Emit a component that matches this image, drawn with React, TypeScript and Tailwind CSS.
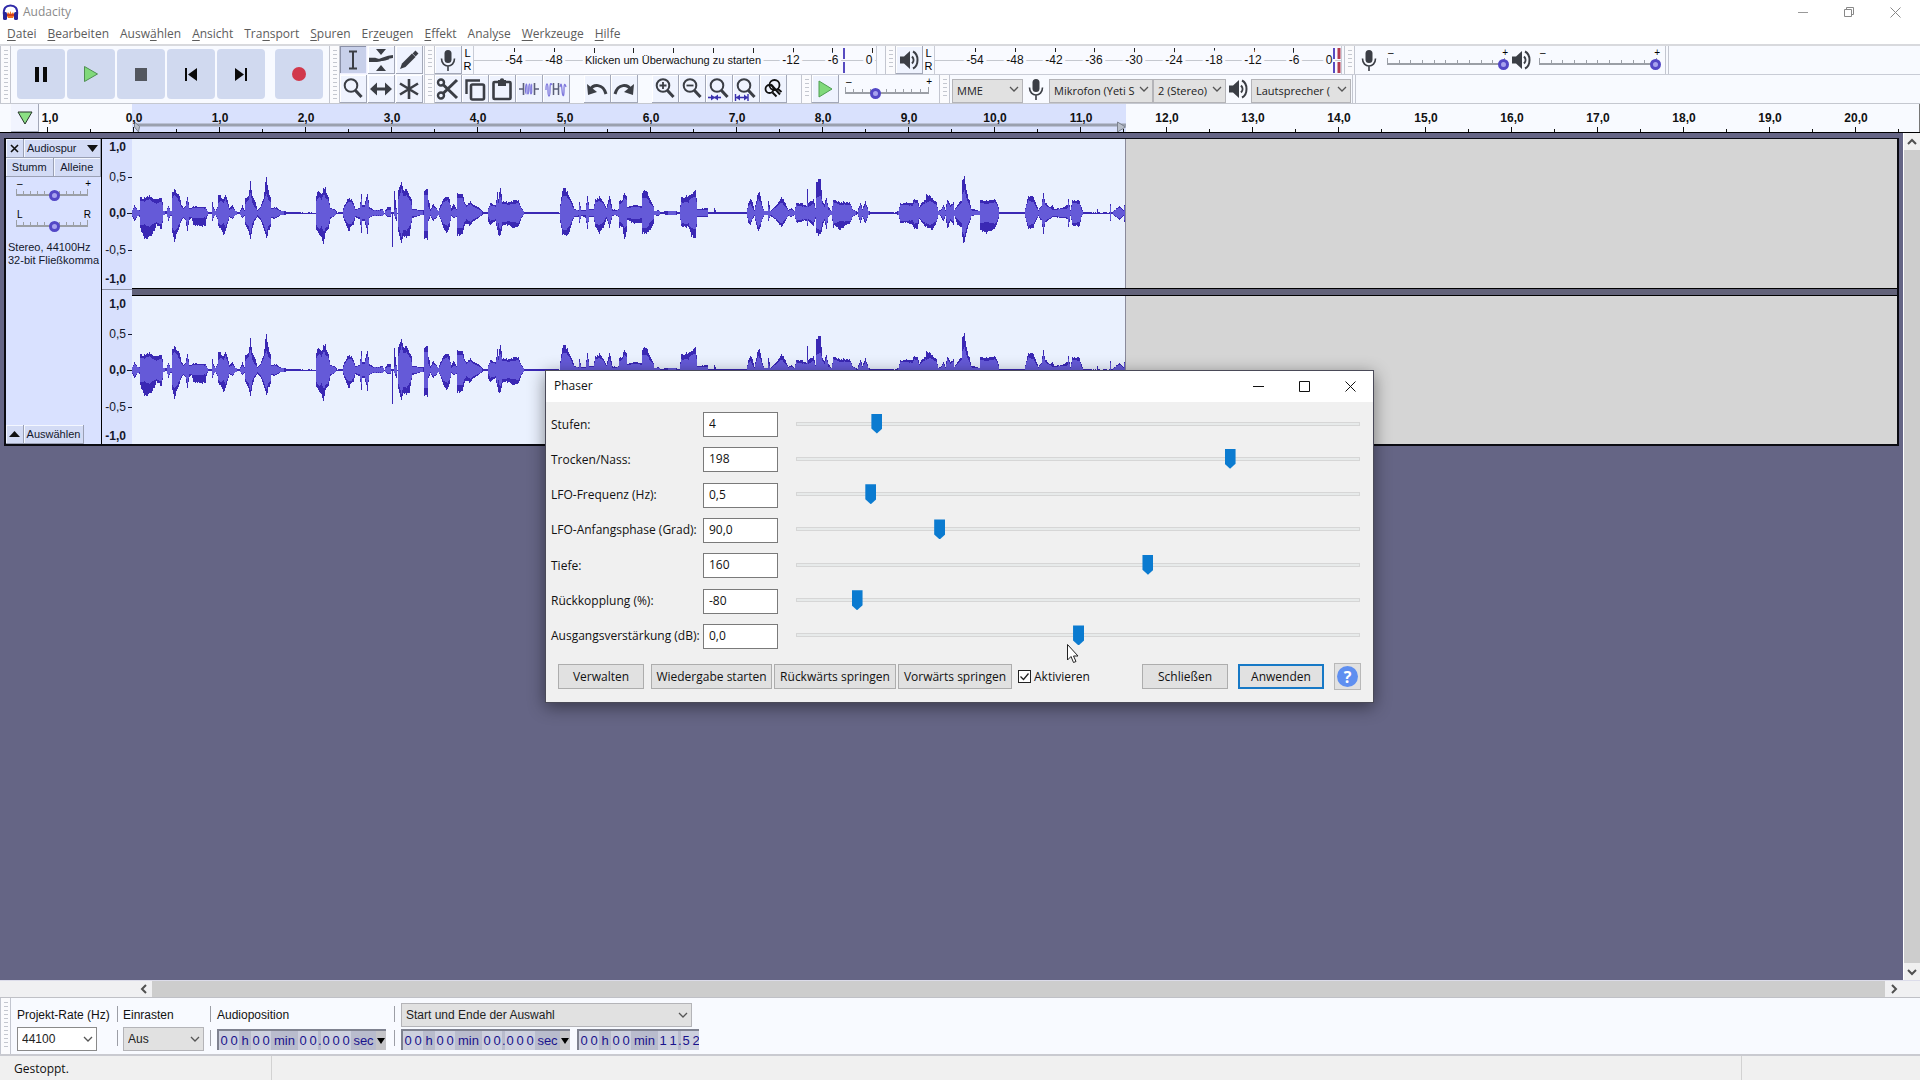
import { useState } from "react";
import type { ReactNode } from "react";

const UI = "font-['Open_Sans',sans-serif]";
const ARIAL = "font-['Liberation_Sans',Arial,sans-serif]";

/* ---------- waveform ---------- */

// x, peak above the axis, peak below the axis
const ENVELOPE: number[][] = [
  [0, 3, 4], [2, 8, 8], [5, 3, 3], [7, 3, 4], [8, 16, 16], [12, 15, 26], [14, 17, 28], [17, 18, 22], [19, 16, 22], [22, 14, 18],
  [24, 13, 12], [27, 14, 14], [29, 15, 17], [30, 12, 10], [31, 2, 2], [34, 2, 1], [36, 8, 8], [38, 2, 3], [39, 2, 3], [40, 22, 20],
  [42, 24, 28], [44, 21, 22], [47, 17, 14], [49, 8, 8], [51, 5, 5], [53, 7, 7], [55, 17, 18], [57, 5, 7], [59, 5, 5], [61, 7, 12],
  [65, 6, 13], [73, 6, 13], [74, 4, 6], [76, 1, 1], [79, 1, 1], [80, 12, 8], [81, 6, 5], [83, 2, 2], [85, 6, 6], [86, 18, 14],
  [88, 18, 16], [91, 13, 22], [93, 19, 19], [95, 14, 12], [97, 5, 4], [100, 8, 6], [103, 2, 2], [107, 1, 1], [110, 8, 5], [112, 3, 3],
  [113, 14, 12], [116, 17, 18], [118, 32, 26], [120, 17, 14], [122, 14, 8], [125, 3, 4], [128, 6, 7], [131, 15, 16], [134, 37, 26],
  [136, 22, 18], [138, 17, 14], [139, 5, 5], [142, 6, 6], [145, 5, 4], [149, 2, 2], [159, 1, 1], [169, 0.5, 0.5], [183, 0.5, 0.5],
  [184, 16, 16], [186, 24, 20], [189, 18, 24], [191, 24, 32], [193, 25, 20], [196, 16, 17], [198, 5, 6], [202, 4, 3], [205, 0.5, 0.5],
  [210, 1, 1], [212, 8, 8], [216, 15, 18], [219, 14, 14], [221, 10, 12], [223, 4, 4], [227, 5, 6], [229, 19, 20], [230, 8, 8],
  [232, 8, 8], [235, 19, 20], [237, 6, 5], [241, 3, 3], [250, 4, 3], [252, 0.5, 0.5], [255, 7, 4], [258, 6, 4], [259, 0.5, 0.5],
  [260, 1, 33], [261, 0.5, 1], [262, 23, 3], [264, 5, 8], [265, 0.5, 1], [266, 22, 18], [269, 32, 32], [271, 22, 24], [274, 24, 24], [277, 18, 22],
  [279, 14, 10], [280, 4, 5], [289, 3, 2], [291, 3, 2], [292, 24, 26], [295, 24, 28], [296, 14, 8], [298, 4, 3], [301, 9, 8], [304, 5, 5],
  [306, 2, 2], [308, 8, 6], [311, 14, 16], [315, 17, 20], [317, 13, 14], [319, 5, 3], [321, 10, 5], [324, 4, 4], [325, 20, 22],
  [330, 20, 22], [332, 12, 13], [334, 8, 10], [338, 12, 13], [341, 8, 8], [346, 6, 5], [351, 1, 1], [355, 1, 1], [356, 5, 9], [358, 10, 12],
  [363, 8, 8], [365, 20, 18], [366, 14, 22], [368, 27, 22], [370, 12, 12], [376, 11, 12], [381, 12, 15], [386, 13, 13], [389, 5, 5],
  [392, 1, 1], [415, 1, 1], [427, 0.5, 0.5], [428, 10, 10], [430, 23, 22], [433, 24, 23], [437, 17, 20], [440, 10, 8], [442, 4, 4],
  [446, 3, 4], [447, 12, 10], [449, 3, 3], [453, 3, 5], [455, 17, 16], [457, 4, 4], [461, 4, 4], [463, 14, 14], [467, 16, 20],
  [471, 12, 14], [474, 5, 6], [477, 18, 14], [480, 4, 3], [483, 3, 2], [486, 4, 4], [487, 12, 14], [490, 14, 14], [492, 20, 28],
  [494, 18, 18], [495, 6, 7], [501, 8, 10], [509, 7, 10], [510, 22, 20], [514, 24, 20], [517, 14, 18], [521, 7, 12], [522, 2, 2],
  [526, 3, 3], [528, 1, 1], [536, 2, 2], [542, 2, 2], [547, 1, 1], [549, 16, 14], [556, 17, 14], [559, 20, 24], [563, 22, 24],
  [564, 16, 14], [565, 4, 4], [575, 5, 4], [576, 1, 1], [581, 1, 1], [582, 5, 1], [584, 1, 1], [597, 1, 1], [614, 0.5, 0.5], [616, 10, 10],
  [618, 14, 12], [620, 10, 6], [622, 3, 3], [624, 12, 12], [626, 22, 19], [628, 18, 14], [630, 7, 6], [632, 2, 2], [635, 2, 2],
  [636, 13, 8], [638, 2, 3], [641, 5, 5], [645, 9, 9], [649, 16, 14], [653, 10, 8], [656, 3, 3], [659, 5, 4], [662, 2, 2],
  [664, 10, 10], [669, 10, 9], [672, 8, 8], [674, 8, 8], [675, 25, 14], [676, 10, 8], [681, 14, 12], [683, 5, 6], [684, 30, 20], [686, 34, 22], [688, 34, 23],
  [690, 12, 14], [692, 9, 8], [694, 16, 16], [696, 6, 4], [699, 2, 2], [701, 14, 14], [703, 13, 13], [707, 11, 17], [714, 11, 12],
  [718, 10, 10], [720, 4, 4], [725, 1, 1], [728, 11, 10], [730, 4, 4], [733, 12, 11], [736, 2, 2], [739, 1, 1], [755, 1, 1],
  [762, 0.5, 0.5], [766, 2, 2], [768, 10, 10], [775, 10, 10], [780, 10, 12], [782, 14, 16], [785, 13, 15], [787, 6, 6], [789, 10, 9],
  [793, 14, 14], [794, 20, 14], [800, 14, 17], [804, 11, 10], [806, 2, 2], [808, 3, 3], [811, 8, 8], [813, 3, 3], [815, 14, 16],
  [818, 8, 8], [821, 11, 12], [822, 3, 3], [825, 8, 12], [829, 13, 14], [830, 34, 26], [832, 36, 30], [834, 22, 20], [837, 12, 10],
  [839, 4, 3], [845, 3, 2], [847, 2, 2], [848, 13, 18], [854, 12, 20], [862, 14, 16], [865, 10, 10], [867, 1, 1], [881, 1, 1],
  [892, 0.5, 0.5], [894, 10, 10], [896, 17, 17], [901, 16, 14], [904, 8, 7], [906, 3, 3], [909, 8, 8], [911, 20, 20], [913, 10, 10],
  [918, 6, 6], [920, 8, 4], [922, 4, 4], [929, 5, 5], [935, 8, 6], [936, 14, 14], [938, 3, 3], [940, 13, 13], [947, 12, 13],
  [949, 6, 4], [951, 1, 1], [959, 0.5, 0.5], [964, 0.5, 0.5], [965, 4, 1], [966, 0.5, 0.5], [977, 0.5, 0.5], [978, 9, 9], [979, 0.5, 0.5],
  [981, 2, 2], [987, 7, 7], [991, 3, 3], [993, 14, 14],
];

const AXIS = 74;

function noise(i: number) {
  const v = Math.sin(i * 12.9898) * 43758.5453;
  return v - Math.floor(v);
}

function buildWave() {
  let peak = "";
  let rms = "";
  let k = 0;
  for (let x = 0; x < 994; x++) {
    while (k < ENVELOPE.length - 2 && ENVELOPE[k + 1][0] <= x) k++;
    const [x0, u0, d0] = ENVELOPE[k];
    const [x1, u1, d1] = ENVELOPE[k + 1];
    const t = Math.min(1, Math.max(0, (x - x0) / (x1 - x0)));
    const ru = u0 + (u1 - u0) * t;
    const rd = d0 + (d1 - d0) * t;
    const up = Math.max(0, Math.round(ru * (1.06 - 0.14 * noise(x))));
    const down = Math.max(1, Math.round(rd * (1.06 - 0.14 * noise(x + 500))));
    peak += `M${x} ${AXIS - up}h1v${up + down}h-1z`;
    const r = Math.round(Math.min(ru, rd) * 0.74 + 0.4 * noise(x + 90));
    if (r > 1) rms += `M${x} ${AXIS - r}h1v${2 * r}h-1z`;
  }
  return { peak, rms };
}

const WAVE = buildWave();

function Channel() {
  return (
    <div className="flex min-h-0 flex-1 bg-[#d5d5d5]">
      <svg className="h-full w-[994px] shrink-0 border-r border-[#8a8a9a] bg-[#eaf1fe]" shapeRendering="crispEdges" aria-hidden="true">
        <path d={WAVE.peak} fill="#3a28b4" />
        <path d={WAVE.rms} fill="#655ad8" />
      </svg>
    </div>
  );
}

function ChannelScale() {
  const rows: [string, number, boolean][] = [
    ["1,0", 12, true], ["0,5", 42, false], ["0,0", 78, true], ["-0,5", 115, false], ["-1,0", 144, true],
  ];
  return (
    <svg className={`w-full min-h-0 flex-1 bg-[#d8e0fd] text-[12px] ${ARIAL}`} aria-label="Amplitude">
      {rows.map(([t, y, bold]) => (
        <text key={t} x="24" y={y} textAnchor="end" fill="#14182c" fontWeight={bold ? 700 : 400}>{t}</text>
      ))}
      <path d="M26 38.5h4M25 74.5h5M26 111.5h4" stroke="#14182c" />
    </svg>
  );
}

/* ---------- icons ---------- */

const INK = "#3b3e45";

function Svg({ size = 24, children }: { size?: number; children: ReactNode }) {
  return (
    <svg width={size} height={size} viewBox="0 0 24 24" fill="none" stroke={INK} strokeWidth="2.4" aria-hidden="true">
      {children}
    </svg>
  );
}

const SpeakerIcon = () => (
  <Svg>
    <path d="M3 8.500h4l6-5.500v18l-6-5.500H3z" fill={INK} stroke="none" />
    <path d="M15 8.500c2 2 2 5 0 7M16 3.500c6 3 6 14 0 17" strokeWidth="2" />
  </Svg>
);
const MicIcon = () => (
  <Svg>
    <rect x="8.500" y="2" width="7" height="13" rx="3.500" fill={INK} stroke="none" />
    <path d="M5.500 10.500c0 10 13 10 13 0M12 18v5" strokeWidth="1.600" />
  </Svg>
);
const Lens = ({ children }: { children?: ReactNode }) => (
  <Svg>
    <circle cx="10" cy="8.500" r="6.300" strokeWidth="2" />
    <path d="M14.500 13.500l6 6.500" strokeWidth="3" />
    {children}
  </Svg>
);

const I = {
  ibeam: <Svg><path d="M8 3.500h8M8 20.500h8M12 3.500v17" strokeWidth="2" /></Svg>,
  envelope: <Svg><path d="M7 1h10l-5 6zM7 23h10l-5-6z" fill={INK} stroke="none" /><path d="M0 12.500h8c5 0 8-3.500 16-4" strokeWidth="3" /><path d="M0 10.500h6c5 2 8 2.500 14 0" strokeWidth="1.400" /></Svg>,
  pencil: <Svg><path d="M3 21l2-5.500L15 5.500l3.500 3.500L8.500 19z" fill={INK} stroke="none" /><path d="M17 4l3 3" strokeWidth="4" /></Svg>,
  zoom: <Lens />,
  shift: <Svg><path d="M3 12h18" strokeWidth="3" /><path d="M1 12l7-6.500v13zM23 12l-7-6.500v13z" fill={INK} stroke="none" /></Svg>,
  star: <Svg><path d="M12 2v20M3 6.500l18 11M3 17.500l18-11" strokeWidth="2.600" /></Svg>,
  cut: <Svg><circle cx="5" cy="5.500" r="3" /><circle cx="5" cy="18.500" r="3" /><path d="M7 7.500L21 21M7 16.500L21 3" strokeWidth="3" /></Svg>,
  copy: <Svg><path d="M3.500 17V3.500H17" strokeWidth="2.400" /><rect x="8" y="7.500" width="13" height="15" rx="1.500" strokeWidth="2.600" /></Svg>,
  paste: <Svg><rect x="3.500" y="5" width="17" height="17" rx="1" strokeWidth="2.600" /><rect x="8" y="3" width="8" height="6" fill={INK} stroke="none" /><circle cx="12" cy="3.500" r="2.200" fill={INK} stroke="none" /></Svg>,
  trim: <Svg><path d="M2 12h4M18 12h4" stroke="#5a5e78" strokeWidth="1.600" /><path d="M6.500 6v12M17.500 6v12" strokeWidth="1.600" stroke="#5a5e78" /><path d="M9.500 17c-1.500 0-1-10 0-10s0 10 1.500 10 0-10 1.500-10 0 10 1.500 10 0-10 1-10" stroke="#7d77dd" strokeWidth="1.200" /></Svg>,
  silence: <Svg><path d="M2 13c0-8 2-8 2 0s2 8 2 0 1-7 2-5M16 10c1-4 1.500-4 2 3s2 8 2 0 1-6 2-3" stroke="#7d77dd" strokeWidth="1.300" /><path d="M9.500 6v12M14.500 6v12M9.500 12h5" stroke="#5a5e78" strokeWidth="1.500" /></Svg>,
  undo: <Svg><path d="M5 13c3-6 13-7 16 4" strokeWidth="3" /><path d="M2 7l1 11 9-3z" fill={INK} stroke="none" /></Svg>,
  redo: <Svg><path d="M19 13c-3-6-13-7-16 4" strokeWidth="3" /><path d="M22 7l-1 11-9-3z" fill={INK} stroke="none" /></Svg>,
  zoomIn: <Lens><path d="M6.500 8.500h7M10 5v7" strokeWidth="1.800" /></Lens>,
  zoomOut: <Lens><path d="M6.500 8.500h7" strokeWidth="1.800" /></Lens>,
  zoomSel: <Lens><path d="M1 20.500h13" stroke="#3a31ae" strokeWidth="1.600" /><path d="M4 17.500v6l4-3zM11 17.500v6l-4-3z" fill="#3a31ae" stroke="none" /></Lens>,
  zoomFit: <Lens><path d="M1.500 17v7M14 17v7M2 20.500h12" stroke="#3a31ae" strokeWidth="1.400" /><path d="M6 17.500v6l-4-3zM10 17.500v6l4-3z" fill="#3a31ae" stroke="none" /></Lens>,
  zoomToggle: <Svg><g stroke="#111"><circle cx="13.500" cy="8" r="5" strokeWidth="1.800" /><circle cx="8.500" cy="12" r="4" strokeWidth="1.800" /><path d="M10 7.500l9 10M17 12l3.500 3M11.500 15.500l4 4" strokeWidth="2" /></g></Svg>,
};

const Chevron = ({ className = "" }: { className?: string }) => (
  <svg className={className} width="10" height="6" viewBox="0 0 10 6" fill="none" stroke="#555" strokeWidth="1.300" aria-hidden="true">
    <path d="M1 1l4 4 4-4" />
  </svg>
);

/* ---------- toolbar parts ---------- */

function Grip() {
  return (
    <div className="flex w-[11px] shrink-0 justify-center self-stretch border-x border-[#c3c6d0] bg-[#fbfbfd] py-1">
      <div className="w-1 bg-[repeating-linear-gradient(to_bottom,#c4c7cf_0,#c4c7cf_1px,transparent_1px,transparent_4px)]" />
    </div>
  );
}

function Tool({ label, children, active }: { label: string; children: ReactNode; active?: boolean }) {
  return (
    <button
      aria-label={label}
      className={
        "grid h-7 w-[27px] shrink-0 place-items-center border-b border-r " +
        (active ? "border-[#eef] bg-[#c8d0ea] shadow-[inset_1px_1px_0_#8b91a8]" : "border-[#a3a8b8] bg-[#eff3fe] shadow-[inset_1px_1px_0_#ffffff]")
      }
    >
      {children}
    </button>
  );
}

function Big({ label, children }: { label: string; children: ReactNode }) {
  return (
    <button aria-label={label} className="grid h-[50px] w-12 place-items-center rounded-[4px] bg-[#d0d9ef]">
      <svg width="20" height="20" viewBox="0 0 20 20" aria-hidden="true">{children}</svg>
    </button>
  );
}

function TickSlider({ label, value, width, left = "–", right = "+" }: { label: string; value: number; width: string; left?: string; right?: string }) {
  return (
    <div className={`relative h-[22px] ${width}`}>
      <div className={`flex h-2 justify-between px-px text-[10px] leading-[8px] text-black ${ARIAL}`}>
        <span>{left}</span>
        <span>{right}</span>
      </div>
      <div className="mr-1 flex h-2 items-end justify-between border-b-2 border-[#9b9fa6] pt-1">
        {Array.from({ length: 11 }, (_, i) => (
          <span key={i} className={"w-px bg-[#9b9fa6] " + (i % 10 ? "h-[3px]" : "h-[5px]")} />
        ))}
      </div>
      <input
        type="range"
        aria-label={label}
        defaultValue={value}
        className="absolute inset-x-0 top-[9px] h-3 w-full appearance-none bg-transparent [&::-webkit-slider-thumb]:size-[11px] [&::-webkit-slider-thumb]:appearance-none [&::-webkit-slider-thumb]:rounded-full [&::-webkit-slider-thumb]:border-[3px] [&::-webkit-slider-thumb]:border-[#5347c6] [&::-webkit-slider-thumb]:bg-[#a8a2ee]"
      />
    </div>
  );
}

function Combo({ id, label, value, width, tone = "border-[#b4b4b8] bg-[#e1e1e1]", text = `text-[12px] ${ARIAL}` }: { id?: string; label: string; value: string; width: string; tone?: string; text?: string }) {
  return (
    <div className={`relative h-6 shrink-0 ${width}`}>
      <select id={id} aria-label={label} className={`size-full appearance-none rounded-none border pl-1 pr-4 text-[#222] ${tone} ${text}`}>
        <option>{value}</option>
      </select>
      <Chevron className="pointer-events-none absolute right-1 top-[9px]" />
    </div>
  );
}

const DEVICE_TEXT = `text-[11px] ${UI}`;

function Meter({ width, labels, zero, message, marks }: { width: string; labels: [string, number][]; zero: number; message?: string; marks: ReactNode }) {
  return (
    <>
      <div className={`flex w-[11px] flex-col justify-between py-px text-center text-[11px] leading-[13px] text-black ${ARIAL}`}>
        <span>L</span>
        <span>R</span>
      </div>
      <svg className={`h-7 shrink-0 border-x border-[#c9ccd6] bg-[#f9faff] text-[12px] ${width} ${ARIAL}`}>
        <path d="M0 14.500H410" stroke="#c5c8cf" />
        {Array.from({ length: 10 }, (_, i) => (
          <path key={i} d={`M${Math.round(40 + i * 39.8)}.500 2v5`} stroke="#222" />
        ))}
        <g fill="#111" stroke="#f9faff" strokeWidth="6" paintOrder="stroke">
          {labels.map(([t, x]) => (
            <text key={t} x={x} y="18" textAnchor="middle">{t}</text>
          ))}
          <text x={zero} y="18" textAnchor="middle">0</text>
          {message && <text x="199" y="18" textAnchor="middle" fontSize="11">{message}</text>}
        </g>
        {marks}
      </svg>
    </>
  );
}

function Toolbars() {
  return (
    <div className="flex border-b border-t-2 border-b-[#c5c8d0] border-t-[#d8d9dd] bg-[#f8faff]">
      <div className="flex w-[329px] shrink-0">
        <Grip />
        <div className="flex items-start gap-0.5 pl-1.5 pt-[3px]">
          <Big label="Pause"><path d="M4 3h4v15H4zM12 3h4v15h-4z" fill="#0a0a0a" /></Big>
          <Big label="Wiedergabe"><path d="M3.500 2.500v15l13-7.500z" fill="#80d97a" stroke="#4f8f52" /></Big>
          <Big label="Stopp"><path d="M4 4h12v13H4z" fill="#53575f" /></Big>
          <Big label="Zum Anfang springen"><path d="M4 4h2v13H4zM16 4v13L7 10.500z" fill="#0a0a0a" /></Big>
          <Big label="Zum Ende springen"><path d="M14 4h2v13h-2zM4 4v13l9-6.500z" fill="#0a0a0a" /></Big>
          <div className="pl-2">
            <Big label="Aufnahme"><circle cx="10" cy="10" r="7" fill="#d1384b" /></Big>
          </div>
        </div>
      </div>
      <Grip />
      <div className="grid shrink-0 grid-cols-3 gap-px">
        <Tool label="Auswahlwerkzeug" active>{I.ibeam}</Tool>
        <Tool label="Hüllkurvenwerkzeug">{I.envelope}</Tool>
        <Tool label="Zeichenwerkzeug">{I.pencil}</Tool>
        <Tool label="Zoomwerkzeug">{I.zoom}</Tool>
        <Tool label="Verschiebewerkzeug">{I.shift}</Tool>
        <Tool label="Mehrfachwerkzeug">{I.star}</Tool>
      </div>
      <div className="flex min-w-0 flex-1 flex-col pl-px">
        <div className="flex h-[29px] items-center border-b border-[#c9ccd6]">
          <Grip />
          <Tool label="Aufnahmepegel"><MicIcon /></Tool>
          <Meter
            width="w-[404px]"
            zero={395}
            labels={[["-54", 40], ["-48", 80], ["-12", 317], ["-6", 359]]}
            message="Klicken um Überwachung zu starten"
            marks={<path d="M370 2v11M370 16v11" stroke="#574bc0" strokeWidth="2" />}
          />
          <div className="w-2" />
          <Grip />
          <Tool label="Wiedergabepegel"><SpeakerIcon /></Tool>
          <Meter
            width="w-[408px]"
            zero={394}
            labels={[["-54", 40], ["-48", 80], ["-42", 119], ["-36", 159], ["-30", 199], ["-24", 239], ["-18", 279], ["-12", 318], ["-6", 359]]}
            marks={
              <>
                <path d="M399 2v11M399 16v11" stroke="#574bc0" strokeWidth="2" />
                <path d="M404 2v11M404 16v11" stroke="#b43a50" strokeWidth="3" />
              </>
            }
          />
          <div className="w-0.5" />
          <Grip />
          <div className="flex h-full items-center gap-1 border-r border-[#c3c6d0] pl-0.5 pr-1">
            <MicIcon />
            <div className="pl-0.5"><TickSlider label="Aufnahmelautstärke" value={100} width="w-[122px]" /></div>
            <div className="-ml-1"><SpeakerIcon /></div>
            <div className="pl-0.5"><TickSlider label="Wiedergabelautstärke" value={100} width="w-[122px]" /></div>
          </div>
          <div className="h-full w-[3px] border-r border-[#c3c6d0]" />
        </div>
        <div className="flex h-7 items-center">
          <Grip />
          <Tool label="Ausschneiden">{I.cut}</Tool>
          <Tool label="Kopieren">{I.copy}</Tool>
          <Tool label="Einfügen">{I.paste}</Tool>
          <Tool label="Trimmen">{I.trim}</Tool>
          <Tool label="Stille">{I.silence}</Tool>
          <div className="w-3.5" />
          <Tool label="Rückgängig">{I.undo}</Tool>
          <Tool label="Wiederholen">{I.redo}</Tool>
          <div className="w-3.5" />
          <Tool label="Vergrößern">{I.zoomIn}</Tool>
          <Tool label="Verkleinern">{I.zoomOut}</Tool>
          <Tool label="Auswahl einpassen">{I.zoomSel}</Tool>
          <Tool label="Projekt einpassen">{I.zoomFit}</Tool>
          <Tool label="Zoom umschalten">{I.zoomToggle}</Tool>
          <div className="w-3.5" />
          <Grip />
          <Tool label="Mit Geschwindigkeit abspielen">
            <svg width="20" height="20" viewBox="0 0 20 20" aria-hidden="true"><path d="M4 2v16l13-8z" fill="#80d97a" stroke="#4f9f52" /></svg>
          </Tool>
          <div className="px-1.5"><TickSlider label="Geschwindigkeit" value={32} width="w-[88px]" /></div>
          <Grip />
          <div className="flex items-center pl-0.5">
            <Combo label="Audio-Host" value="MME" width="w-[71px]" text={DEVICE_TEXT} />
            <div className="px-px"><MicIcon /></div>
            <Combo label="Aufnahmegerät" value="Mikrofon (Yeti S" width="w-[104px]" text={DEVICE_TEXT} />
            <Combo label="Aufnahmekanäle" value="2 (Stereo)" width="w-[73px]" text={DEVICE_TEXT} />
            <div className="pr-px"><SpeakerIcon /></div>
            <Combo label="Wiedergabegerät" value="Lautsprecher (" width="w-[100px]" text={DEVICE_TEXT} />
          </div>
          <div className="ml-px h-full w-1 border-x border-[#c3c6d0]" />
        </div>
      </div>
    </div>
  );
}

/* ---------- timeline ---------- */

function Timeline() {
  const marks = Array.from({ length: 22 }, (_, i) => i - 1);
  return (
    <div className="flex h-[29px] border-b border-black bg-[#f8faff]">
      <div className="w-[11px] shrink-0" />
      <button aria-label="Wiedergabekopf anheften" className="grid w-7 shrink-0 place-items-center border-b border-r border-[#a3a8b8] bg-[#f1f4fe]">
        <svg width="16" height="14" viewBox="0 0 16 14" aria-hidden="true"><path d="M1 1h14L8 13z" fill="#8be084" stroke="#26352a" /></svg>
      </button>
      <svg className={`h-full min-w-0 flex-1 border-r border-[#777] text-[12px] font-bold ${ARIAL}`} aria-label="Zeitleiste">
        <rect x="93" width="994" height="28" fill="#d9e1fd" />
        <path d="M95 21h992" stroke="#9aa0ae" strokeWidth="3" />
        <path d="M95.500 18l5 4.500-1 5.500-4-5zM1078.500 18v10l8-5z" fill="#b9bfca" stroke="#7c828f" />
        {marks.map((n) => {
          const x = Math.round(94 + n * 86.1);
          return (
            <g key={n}>
              <path d={`M${x}.500 23v5M${x + 43}.500 25v3`} stroke="#111" />
              <text x={x + (n < 0 ? 3 : 1)} y="18" textAnchor="middle" fill="#111">{`${Math.abs(n)},0`}</text>
            </g>
          );
        })}
      </svg>
    </div>
  );
}

/* ---------- track ---------- */

const RAISED = "border-b border-r border-[#9aa0b4] bg-[#d3dbf5] shadow-[inset_1px_1px_0_#f4f7ff]";

function TrackPanel() {
  return (
    <div className={`flex w-[95px] shrink-0 flex-col bg-[#d9e1ff] text-[11px] text-[#14182c] ${ARIAL}`}>
      <div className="flex h-[19px]">
        <button aria-label="Spur schließen" className={`grid w-[18px] place-items-center ${RAISED}`}>
          <svg width="9" height="9" viewBox="0 0 9 9" stroke="#111" strokeWidth="1.600" aria-hidden="true"><path d="M1 1l7 7M8 1L1 8" /></svg>
        </button>
        <button className={`flex flex-1 items-center justify-between pl-[3px] pr-0.5 ${RAISED}`}>
          Audiospur
          <svg width="11" height="7" viewBox="0 0 11 7" aria-hidden="true"><path d="M0 0h11L5.500 7z" fill="#111" /></svg>
        </button>
      </div>
      <div className="grid h-[19px] grid-cols-2">
        <button className={RAISED}>Stumm</button>
        <button className={RAISED}>Alleine</button>
      </div>
      <div className="flex flex-col gap-[9px] pl-2.5 pt-[3px]">
        <TickSlider label="Lautstärke" value={50} width="w-[76px]" />
        <TickSlider label="Balance" value={50} width="w-[76px]" left="L" right="R" />
      </div>
      <div className="whitespace-nowrap pl-0.5 pt-2 leading-[13px]">
        <div>Stereo, 44100Hz</div>
        <div>32-bit Fließkomma</div>
      </div>
      <div className="mt-auto flex h-[19px]">
        <button aria-label="Einklappen" className={`grid w-[18px] place-items-center ${RAISED}`}>
          <svg width="11" height="6" viewBox="0 0 11 6" aria-hidden="true"><path d="M0 6h11L5.500 0z" fill="#111" /></svg>
        </button>
        <button className={`w-[60px] ${RAISED}`}>Auswählen</button>
      </div>
    </div>
  );
}

function Track() {
  return (
    <div className="flex h-[308px] border-2 border-t border-[#0b0b12]">
      <TrackPanel />
      <div className="flex w-[31px] shrink-0 flex-col border-l border-black bg-[#d8e0fd]">
        <ChannelScale />
        <div className="my-px h-[6px] border-t border-[#8a8fa3] bg-[#d8e0fd]" />
        <ChannelScale />
      </div>
      <div className="flex min-w-0 flex-1 flex-col">
        <Channel />
        <div className="h-2 border-y border-black bg-[#626279]" />
        <Channel />
      </div>
    </div>
  );
}

/* ---------- dialog ---------- */

const PARAMS: [string, string, number][] = [
  ["Stufen:", "4", 135],
  ["Trocken/Nass:", "198", 776],
  ["LFO-Frequenz (Hz):", "0,5", 124],
  ["LFO-Anfangsphase (Grad):", "90,0", 249],
  ["Tiefe:", "160", 627],
  ["Rückkopplung (%):", "-80", 99],
  ["Ausgangsverstärkung (dB):", "0,0", 501],
];

const WIN_BTN = "h-[25px] border border-[#adadad] bg-[#e1e1e1] whitespace-nowrap";

function ParamRow({ label, initial, pos }: { label: string; initial: string; pos: number }) {
  const [text, setText] = useState(initial);
  return (
    <div className="flex h-[25px] items-center">
      <label htmlFor={label} className="w-[152px] shrink-0 whitespace-nowrap">{label}</label>
      <input id={label} value={text} onChange={(e) => setText(e.target.value)} className="h-[25px] w-[75px] shrink-0 border border-[#7a7a7a] bg-white pb-0.5 pl-[5px]" />
      <input
        type="range"
        min={0}
        max={1000}
        defaultValue={pos}
        aria-label={label}
        className="mb-0.5 ml-[18px] h-5 min-w-0 flex-1 appearance-none bg-transparent [&::-webkit-slider-runnable-track]:h-1 [&::-webkit-slider-runnable-track]:border [&::-webkit-slider-runnable-track]:border-[#d6d6d6] [&::-webkit-slider-runnable-track]:bg-[#e7eaea] [&::-webkit-slider-thumb]:-mt-[9px] [&::-webkit-slider-thumb]:h-5 [&::-webkit-slider-thumb]:w-[11px] [&::-webkit-slider-thumb]:appearance-none [&::-webkit-slider-thumb]:bg-[#0b7bd0] [&::-webkit-slider-thumb]:[clip-path:polygon(0_0,100%_0,100%_75%,50%_100%,0_75%)]"
      />
    </div>
  );
}

function PhaserDialog() {
  return (
    <div role="dialog" aria-label="Phaser" className={`absolute left-[545px] top-[370px] w-[829px] border border-[#4a4a58] bg-[#f0f0f0] text-[12px] text-[#111] shadow-[0_4px_16px_rgba(0,0,0,0.45)] ${UI}`}>
      <div className="flex h-[31px] items-center bg-white pb-px pl-2">
        <span className="flex-1">Phaser</span>
        <button aria-label="Minimieren" className="grid h-full w-[46px] place-items-center">
          <svg width="11" height="11" aria-hidden="true"><path d="M0 5.500h11" stroke="#111" /></svg>
        </button>
        <button aria-label="Maximieren" className="grid h-full w-[46px] place-items-center">
          <svg width="11" height="11" fill="none" aria-hidden="true"><path d="M.5.500h10v10H.5z" stroke="#111" /></svg>
        </button>
        <button aria-label="Schließen" className="grid h-full w-[46px] place-items-center">
          <svg width="11" height="11" aria-hidden="true"><path d="M.5.500l10 10M10.500.500l-10 10" stroke="#111" /></svg>
        </button>
      </div>
      <div className="flex h-[247px] flex-col justify-between pl-[5px] pr-[13px] pt-2.5">
        {PARAMS.map(([label, value, pos]) => (
          <ParamRow key={label} label={label} initial={value} pos={pos} />
        ))}
      </div>
      <div className="flex items-center pb-3 pl-3 pr-3 pt-3.5">
        <button className={`w-[86px] ${WIN_BTN}`}>Verwalten</button>
        <div className="ml-[7px] flex gap-0.5">
          <button className={`w-[121px] ${WIN_BTN}`}>Wiedergabe starten</button>
          <button className={`w-[122px] ${WIN_BTN}`}>Rückwärts springen</button>
          <button className={`w-[114px] ${WIN_BTN}`}>Vorwärts springen</button>
        </div>
        <label className="ml-1.5 flex items-center gap-[3px]">
          <span className="relative grid size-[13px]">
            <input type="checkbox" defaultChecked className="peer size-[13px] appearance-none border border-[#222] bg-white" />
            <svg className="pointer-events-none absolute inset-0 hidden peer-checked:block" width="13" height="13" fill="none" stroke="#222" strokeWidth="1.300" aria-hidden="true"><path d="M2.500 6.500l3 3 5-6" /></svg>
          </span>
          Aktivieren
        </label>
        <div className="ml-auto flex items-center gap-2.5">
          <button className={`w-[86px] ${WIN_BTN}`}>Schließen</button>
          <button className="h-[25px] w-[86px] border-2 border-[#1779c6] bg-[#e1e1e1]">Anwenden</button>
          <button aria-label="Hilfe" className="grid size-[27px] place-items-center border border-[#b8b8b8] bg-[#e1e1e1]">
            <span className="grid size-[21px] place-items-center rounded-full bg-[#5f8ff0] text-[16px] font-bold leading-none text-white">?</span>
          </button>
        </div>
      </div>
    </div>
  );
}

/* ---------- selection bar ---------- */

function TimeField({ label, parts, width, arrow = true }: { label: string; parts: string[]; width: string; arrow?: boolean }) {
  return (
    <div role="group" aria-label={label} className={`flex h-[21px] shrink-0 items-center overflow-hidden whitespace-nowrap border-l-2 border-t-2 border-[#7f8290] bg-[#b9bccd] text-[13px] text-[#1a138c] ${width} ${ARIAL}`}>
      {parts.map((p, i) =>
        /^[0-9]$/.test(p) ? (
          <span key={i} className="w-2.5 shrink-0 bg-[#cdd0de] text-center">{p}</span>
        ) : (
          <span key={i} className={"shrink-0 text-center " + (p === "." ? "w-[3px]" : p === "h" ? "w-3" : p === "min" ? "w-[27px]" : "w-[25px]")}>{p}</span>
        )
      )}
      {arrow && (
        <button aria-label={`${label} Format`} className="ml-auto grid h-full w-2.5 shrink-0 place-items-center bg-[#c4c4c8]">
          <svg width="8" height="6" viewBox="0 0 8 6" aria-hidden="true"><path d="M0 0h8L4 6z" fill="#000" /></svg>
        </button>
      )}
    </div>
  );
}

const ZERO = ["0", "0", "h", "0", "0", "min", "0", "0", ".", "0", "0", "0", "sec"];
const END = ["0", "0", "h", "0", "0", "min", "1", "1", ".", "5", "2"];

function Divider() {
  return (
    <div className="flex w-px shrink-0 flex-col justify-between py-2">
      <div className="h-4 bg-[#9c9ea6]" />
      <div className="h-4 bg-[#9c9ea6]" />
    </div>
  );
}

function SelectionBar() {
  const col = "flex flex-col justify-between pt-[5px]";
  return (
    <div className={`flex h-[59px] border-b-2 border-t border-b-[#c9cad0] border-t-[#bfc0c6] bg-[#f8faff] text-[12px] text-[#111] ${ARIAL}`}>
      <Grip />
      <div className={`${col} w-[106px] pb-[3px] pl-1.5`}>
        <label htmlFor="rate" className="whitespace-nowrap leading-6">Projekt-Rate (Hz)</label>
        <Combo id="rate" label="Projekt-Rate" value="44100" width="w-20" tone="border-[#8a8a8a] bg-white" />
      </div>
      <Divider />
      <div className={`${col} w-[92px] pb-[3px] pl-[5px]`}>
        <label htmlFor="snap" className="leading-6">Einrasten</label>
        <Combo id="snap" label="Einrasten" value="Aus" width="w-[81px]" />
      </div>
      <Divider />
      <div className={`${col} w-[183px] pb-1 pl-1.5`}>
        <span className="leading-6">Audioposition</span>
        <TimeField label="Audioposition" parts={ZERO} width="w-[169px]" />
      </div>
      <Divider />
      <div className={`${col} pb-1 pl-1.5`}>
        <Combo label="Auswahlmodus" value="Start und Ende der Auswahl" width="w-[291px]" />
        <div className="flex gap-[7px]">
          <TimeField label="Auswahlbeginn" parts={ZERO} width="w-[169px]" />
          <TimeField label="Auswahlende" parts={END} width="w-[122px]" arrow={false} />
        </div>
      </div>
    </div>
  );
}

/* ---------- window ---------- */

const MENU: [string, string, string][] = [
  ["", "D", "atei"], ["", "B", "earbeiten"], ["Ausw", "ä", "hlen"], ["", "A", "nsicht"], ["Tra", "n", "sport"], ["", "S", "puren"],
  ["Er", "z", "eugen"], ["", "E", "ffekt"], ["Anal", "y", "se"], ["", "W", "erkzeuge"], ["", "H", "ilfe"],
];

const Arrow = ({ d }: { d: string }) => (
  <svg width="10" height="10" viewBox="0 0 10 10" fill="none" stroke="#505050" strokeWidth="2" aria-hidden="true"><path d={d} /></svg>
);

export default function App() {
  return (
    <div className="relative flex h-screen flex-col overflow-hidden bg-white">
      <header className={`flex h-6 shrink-0 items-center bg-white pl-0.5 pr-0.5 text-[12px] text-[#8a8a8a] ${UI}`}>
        <svg width="17" height="17" viewBox="0 0 17 17" fill="none" aria-hidden="true">
          <path d="M2 11C1 4 4 1.500 8.500 1.500S16 4 15 11" stroke="#2f2aa8" strokeWidth="2" />
          <path d="M4.500 11l1.500-3 1.500 2 1-3 1 3 1.500-2 1.500 3-1.500 3H6z" fill="#f0701e" />
          <path d="M5 11h7" stroke="#c8321e" strokeWidth="1.500" />
          <rect x="1" y="8" width="4" height="8" rx="1.500" fill="#2a2698" />
          <rect x="12" y="8" width="4" height="8" rx="1.500" fill="#2a2698" />
        </svg>
        <h1 className="flex-1 pl-1">Audacity</h1>
        <button aria-label="Minimieren" className="grid h-full w-[46px] place-items-center"><svg width="10" height="10"><path d="M0 5.500h10" stroke="#999" /></svg></button>
        <button aria-label="Wiederherstellen" className="grid h-full w-[46px] place-items-center"><svg width="10" height="10" fill="none" stroke="#888"><path d="M.5 2.500h7v7h-7zM2.500 2.500v-2h7v7h-2" /></svg></button>
        <button aria-label="Schließen" className="grid h-full w-[46px] place-items-center"><svg width="11" height="11" stroke="#888"><path d="M.5.500l10 10M10.500.500l-10 10" /></svg></button>
      </header>
      <nav className={`flex h-5 shrink-0 items-center gap-[11px] bg-white pl-[7px] text-[12px] text-[#5c5c5c] ${UI}`}>
        {MENU.map(([a, b, c]) => (
          <button key={a + b + c}>{a}<u className="underline-offset-2">{b}</u>{c}</button>
        ))}
      </nav>
      <Toolbars />
      <Timeline />
      <div className="flex min-h-0 flex-1">
        <main className="min-w-0 flex-1 bg-[#656585] pl-1 pr-1 pt-[5px]">
          <Track />
        </main>
        <div className="flex w-[17px] shrink-0 flex-col items-center border-l border-white bg-[#f0f0f0]">
          <button aria-label="Nach oben" className="grid h-[17px] place-items-center"><Arrow d="M1 7l4-4 4 4" /></button>
          <div className="w-full flex-1 bg-[#cdcdcd]" />
          <button aria-label="Nach unten" className="grid h-[17px] place-items-center"><Arrow d="M1 3l4 4 4-4" /></button>
        </div>
      </div>
      <div className="flex h-[17px] shrink-0 border-t border-[#dcdcea] bg-[#f0f0f2]">
        <button aria-label="Nach links" className="grid w-[152px] place-items-center pl-[136px]"><Arrow d="M7 1L3 5l4 4" /></button>
        <div className="flex-1 bg-[#cdcdcd]" />
        <button aria-label="Nach rechts" className="grid w-[17px] place-items-center"><Arrow d="M3 1l4 4-4 4" /></button>
        <div className="w-[18px]" />
      </div>
      <SelectionBar />
      <footer className={`flex h-6 shrink-0 bg-[#f0f0f0] text-[12px] leading-6 text-[#111] ${UI}`}>
        <div className="w-[272px] border-r border-[#d2d2d2] pl-3.5 pt-px">Gestoppt.</div>
        <div className="flex-1 border-r border-[#d2d2d2]" />
        <div className="w-[178px]" />
      </footer>
      <PhaserDialog />
      <svg className="pointer-events-none absolute left-[1066px] top-[643px]" width="14" height="21" viewBox="0 0 14 21" aria-hidden="true">
        <path d="M1.500 1.500v15.500l3.500-3.500 2.500 6 2.500-1-2.500-5.500h4.500z" fill="#fff" stroke="#222" />
      </svg>
    </div>
  );
}
